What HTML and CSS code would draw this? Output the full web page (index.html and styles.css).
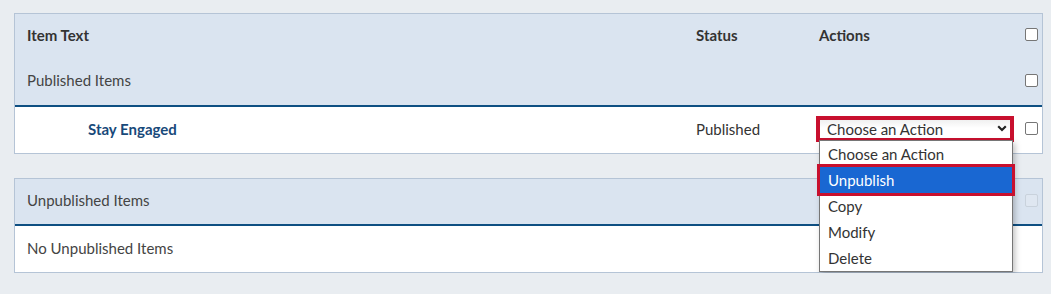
FILE: index.html
```html
<!DOCTYPE html>
<html lang="en">
<head>
<meta charset="utf-8">
<title>Items</title>
<link rel="stylesheet" href="styles.css">
</head>
<body>
<div class="page">
  <section class="panel">
    <div class="head">
      <div class="row row-top">
        <div class="cell th">Item Text</div>
        <div class="cell th">Status</div>
        <div class="cell th">Actions</div>
        <div class="cell cb"><span class="box"></span></div>
      </div>
      <div class="row row-group">
        <div class="cell group">Published Items</div>
        <div class="cell"></div>
        <div class="cell"></div>
        <div class="cell cb"><span class="box"></span></div>
      </div>
    </div>
    <div class="row row-data">
      <div class="cell item">Stay Engaged</div>
      <div class="cell">Published</div>
      <div class="cell action">
        <div class="select">
          <span>Choose an Action</span>
          <svg class="chev" width="10" height="7" viewBox="0 0 10 7"><path d="M1.2 1.3 L5 5 L8.8 1.3" fill="none" stroke="#222" stroke-width="2.2"/></svg>
        </div>
        <ul class="menu">
          <li>Choose an Action</li>
          <li class="sel">Unpublish</li>
          <li>Copy</li>
          <li>Modify</li>
          <li>Delete</li>
        </ul>
      </div>
      <div class="cell cb"><span class="box"></span></div>
    </div>
  </section>

  <section class="panel panel2">
    <div class="head">
      <div class="row row-group2">
        <div class="cell group">Unpublished Items</div>
        <div class="cell"></div>
        <div class="cell"></div>
        <div class="cell cb"><span class="box disabled"></span></div>
      </div>
    </div>
    <div class="row row-data">
      <div class="cell group">No Unpublished Items</div>
      <div class="cell"></div>
      <div class="cell"></div>
      <div class="cell"></div>
    </div>
  </section>
</div>
</body>
</html>
```
FILE: styles.css
```css
html, body {
  margin: 0;
  padding: 0;
  background: #e9edf1;
}
body {
  font-family: Lato, "Liberation Sans", sans-serif;
  font-size: 15px;
  color: #333;
}
.page {
  padding: 13px 8px 0 14px;
  display: flex;
  flex-direction: column;
  gap: 24px;
}
.panel {
  border: 1px solid #b5c4d6;
  background: #fff;
}
.head {
  background: #dae4f0;
  border-bottom: 2px solid #0e4f82;
}
.row {
  box-sizing: border-box;
  display: grid;
  grid-template-columns: 669px 123px 206px 13px;
  padding: 0 4px 3px 12px;
  align-items: center;
}
.row-top { height: 44px; }
.row-group { height: 47px; }
.row-group2 { height: 45px; }
.row-data { height: 46px; }
.th { font-weight: 700; color: #333; }
.group { color: #444; }
.item {
  padding-left: 61px;
  color: #18497a;
  font-weight: 700;
}
.cb { display: flex; }
.box {
  width: 11px;
  height: 11px;
  border: 1px solid #767676;
  border-radius: 2px;
  background: #fff;
}
.box.disabled {
  border-color: #c9d2dc;
  background: #dfe7f1;
}
.action { position: relative; }
.select {
  margin-left: 1px;
  width: 180px;
  height: 18px;
  padding: 0 3px 0 7px;
  background: linear-gradient(#f0f0f0, #fff 45%);
  outline: 4px solid #c8102e;
  display: flex;
  align-items: center;
  justify-content: space-between;
  color: #333;
}
.chev { display: block; }
.menu {
  position: absolute;
  left: 0;
  top: 20px;
  width: 192px;
  margin: 0;
  padding: 0;
  list-style: none;
  background: #fff;
  border: 1px solid #767676;
  box-shadow: 2px 3px 6px rgba(0,0,0,0.25);
  z-index: 5;
}
.menu li {
  height: 26px;
  line-height: 26px;
  padding-left: 8px;
  color: #333;
}
.menu li.sel {
  background: #1967d2;
  color: #fff;
  outline: 3px solid #c8102e;
  position: relative;
}
```
